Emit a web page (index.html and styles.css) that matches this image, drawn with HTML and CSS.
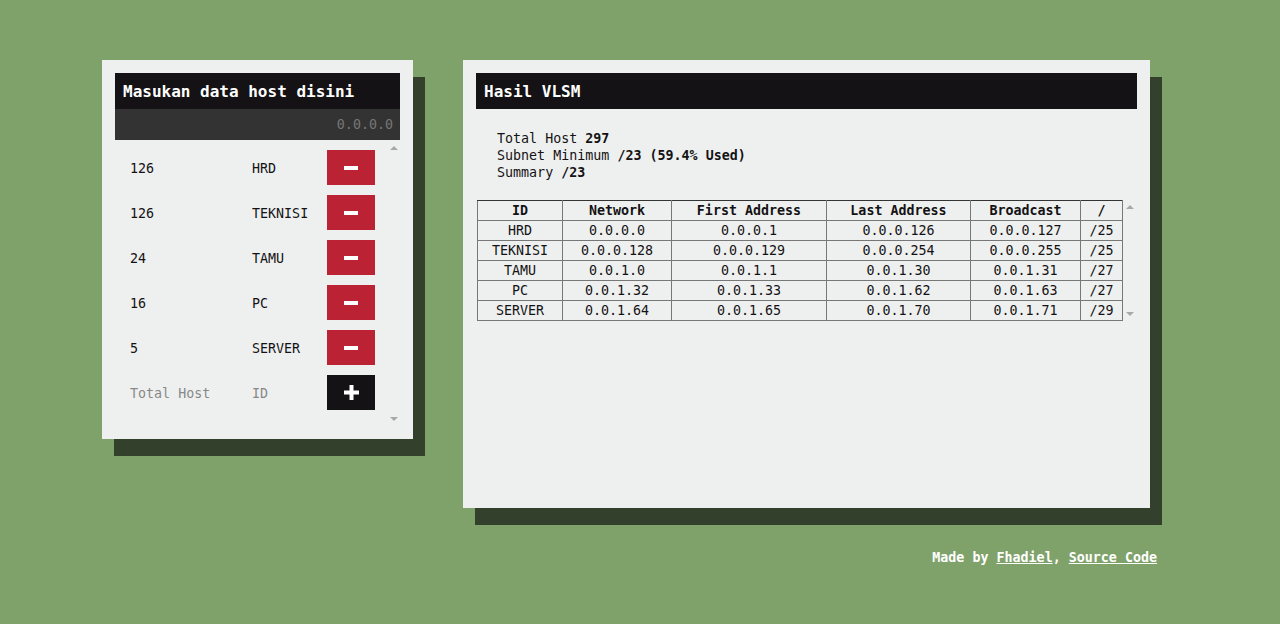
FILE: index.html
```html
<!DOCTYPE html>
<html lang="id">
<head>
<meta charset="utf-8">
<title>VLSM Calculator</title>
<link rel="stylesheet" href="styles.css">
</head>
<body>
<main class="page">
  <div class="cards">
    <section class="card card-input">
      <h2 class="card-title">Masukan data host disini</h2>
      <div class="ip-bar"><span class="ip-ph">0.0.0.0</span></div>
      <div class="list-wrap">
        <div class="host-list">
          <div class="host-row"><span>126</span><span>HRD</span><button class="btn btn-del"><svg width="14" height="14" viewBox="0 0 14 14"><rect x="0" y="5" width="14" height="4" fill="#fff"/></svg></button></div>
          <div class="host-row"><span>126</span><span>TEKNISI</span><button class="btn btn-del"><svg width="14" height="14" viewBox="0 0 14 14"><rect x="0" y="5" width="14" height="4" fill="#fff"/></svg></button></div>
          <div class="host-row"><span>24</span><span>TAMU</span><button class="btn btn-del"><svg width="14" height="14" viewBox="0 0 14 14"><rect x="0" y="5" width="14" height="4" fill="#fff"/></svg></button></div>
          <div class="host-row"><span>16</span><span>PC</span><button class="btn btn-del"><svg width="14" height="14" viewBox="0 0 14 14"><rect x="0" y="5" width="14" height="4" fill="#fff"/></svg></button></div>
          <div class="host-row"><span>5</span><span>SERVER</span><button class="btn btn-del"><svg width="14" height="14" viewBox="0 0 14 14"><rect x="0" y="5" width="14" height="4" fill="#fff"/></svg></button></div>
          <div class="host-row ph-row"><span>Total Host</span><span>ID</span><button class="btn btn-add"><svg width="15" height="15" viewBox="0 0 15 15"><rect x="0" y="5.5" width="15" height="4" fill="#fff"/><rect x="5.5" y="0" width="4" height="15" fill="#fff"/></svg></button></div>
        </div>
        <div class="rail"><span class="arrow up"></span><span class="arrow down"></span></div>
      </div>
    </section>

    <section class="card card-result">
      <h2 class="card-title">Hasil VLSM</h2>
      <div class="result-body">
        <div class="summary">
          <div>Total Host <b>297</b></div>
          <div>Subnet Minimum <b>/23 (59.4% Used)</b></div>
          <div>Summary <b>/23</b></div>
        </div>
        <div class="table-wrap">
          <table class="vlsm">
            <colgroup>
              <col class="c-id"><col class="c-net"><col class="c-first"><col class="c-last"><col class="c-bc"><col class="c-pre">
            </colgroup>
            <thead>
              <tr><th>ID</th><th>Network</th><th>First Address</th><th>Last Address</th><th>Broadcast</th><th>/</th></tr>
            </thead>
            <tbody>
              <tr><td>HRD</td><td>0.0.0.0</td><td>0.0.0.1</td><td>0.0.0.126</td><td>0.0.0.127</td><td>/25</td></tr>
              <tr><td>TEKNISI</td><td>0.0.0.128</td><td>0.0.0.129</td><td>0.0.0.254</td><td>0.0.0.255</td><td>/25</td></tr>
              <tr><td>TAMU</td><td>0.0.1.0</td><td>0.0.1.1</td><td>0.0.1.30</td><td>0.0.1.31</td><td>/27</td></tr>
              <tr><td>PC</td><td>0.0.1.32</td><td>0.0.1.33</td><td>0.0.1.62</td><td>0.0.1.63</td><td>/27</td></tr>
              <tr><td>SERVER</td><td>0.0.1.64</td><td>0.0.1.65</td><td>0.0.1.70</td><td>0.0.1.71</td><td>/29</td></tr>
            </tbody>
          </table>
          <div class="rail rail-table"><span class="arrow up"></span><span class="arrow down"></span></div>
        </div>
      </div>
    </section>
  </div>
  <footer class="footer">Made by <a href="#">Fhadiel</a>, <a href="#">Source Code</a></footer>
</main>
</body>
</html>
```

FILE: styles.css
```css
* { box-sizing: border-box; }
html, body { margin: 0; padding: 0; }
body {
  background: #7fa26b;
  font-family: "DejaVu Sans Mono", "Liberation Mono", monospace;
  font-size: 13.33px;
  color: #141214;
  width: 1280px;
  height: 624px;
  overflow: hidden;
}
.page {
  padding: 60px 0 0 102px;
  width: 1157px;
}
.cards {
  display: flex;
  align-items: flex-start;
  gap: 50px;
}
.card {
  background: #eef0ef;
  padding: 13px;
  box-shadow: 12px 17px 0 #33402b;
}
.card-input { width: 311px; height: 379px; }
.card-result { width: 687px; height: 448px; }
.card-title {
  margin: 0;
  height: 36px;
  line-height: 36px;
  padding: 1px 8px 0;
  overflow: hidden;
  background: #141214;
  color: #fff;
  font-size: 16px;
  font-weight: bold;
}
.ip-bar {
  height: 31px;
  background: #333333;
  display: flex;
  align-items: center;
  justify-content: flex-end;
  padding-right: 7px;
}
.ip-ph { color: #777; font-size: 13.33px; }
.list-wrap {
  display: flex;
  height: 286px;
}
.host-list {
  flex: 1;
  padding: 10px 0 0 15px;
  display: flex;
  flex-direction: column;
  gap: 10px;
}
.host-row {
  display: grid;
  grid-template-columns: 122px 75px 48px;
  align-items: center;
  height: 35px;
}
.host-row span { padding-top: 2px; }
.ph-row span { color: #888; }
.btn {
  width: 48px;
  height: 35px;
  border: 0;
  padding: 0;
  margin: 0;
  display: flex;
  align-items: center;
  justify-content: center;
}
.btn-del { background: #bb2233; }
.btn-add { background: #141214; }
.rail {
  width: 13px;
  display: flex;
  flex-direction: column;
  justify-content: space-between;
  align-items: center;
  padding: 6px 0 5px;
}
.arrow {
  width: 0;
  height: 0;
  border-left: 4px solid transparent;
  border-right: 4px solid transparent;
}
.arrow.up { border-bottom: 4px solid #a8a8a8; }
.arrow.down { border-top: 4px solid #a8a8a8; }
.result-body { padding: 21px 0 0 0; }
.summary {
  padding-left: 21px;
  line-height: 17px;
}
.summary b { font-weight: bold; }
.table-wrap {
  display: flex;
  margin-top: 19px;
  padding-left: 1px;
}
.vlsm {
  border-collapse: collapse;
  table-layout: fixed;
  width: 645px;
  border: 1px solid #333;
}
.c-id { width: 85px; }
.c-net { width: 109px; }
.c-first { width: 155px; }
.c-last { width: 144px; }
.c-bc { width: 110px; }
.c-pre { width: 42px; }
.vlsm th, .vlsm td {
  border: 1px solid #777;
  height: 20px;
  padding: 0;
  line-height: 19px;
  text-align: center;
  font-size: 13.33px;
}
.vlsm th { font-weight: bold; border-color: #333 #777 #777 #777; }
.rail-table {
  width: 15px;
  height: 121px;
  padding: 5px 0 5px;
}
.footer {
  margin-top: 41px;
  text-align: right;
  color: #fff;
  font-weight: bold;
  line-height: 17px;
}
.footer a { color: #fff; text-decoration: underline; }
```
